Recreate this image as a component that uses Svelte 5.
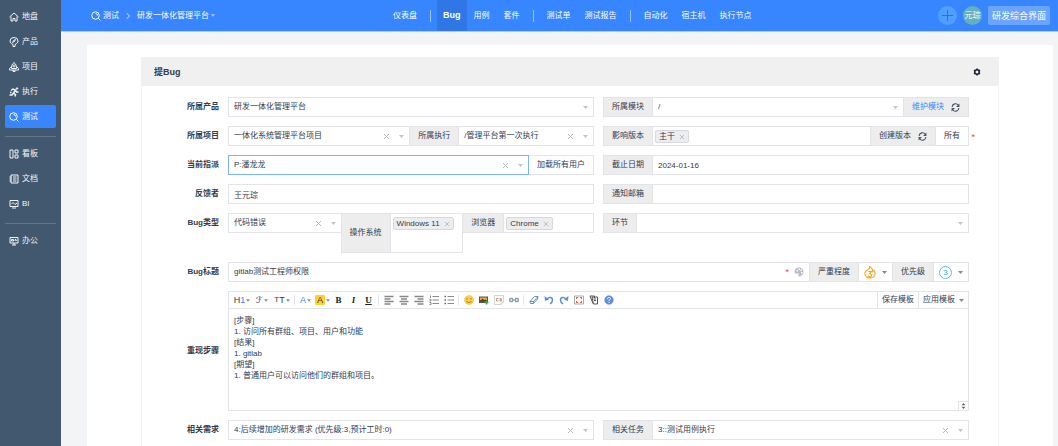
<script lang="ts">
	const mainMenu = [
		[
			{ name: '地盘', icon: 'home' },
			{ name: '产品', icon: 'product' },
			{ name: '项目', icon: 'project' },
			{ name: '执行', icon: 'run' },
			{ name: '测试', icon: 'test' }
		],
		[
			{ name: '看板', icon: 'kanban' },
			{ name: '文档', icon: 'doc' },
			{ name: 'BI', icon: 'bi' }
		],
		[{ name: '办公', icon: 'office' }]
	];
	const navGroups = [
		['仪表盘'],
		['Bug', '用例', '套件'],
		['测试单', '测试报告'],
		['自动化', '宿主机', '执行节点']
	];
	const toolGroups = [
		['bold', 'italic', 'underline'],
		['left', 'center', 'right', 'ol', 'ul'],
		['smile', 'image', 'code', 'link'],
		['eraser', 'undo', 'redo', 'full', 'source', 'help']
	];
	let activeMenu = $state('测试');
	let activeNav = $state('Bug');
	let title = $state('gitlab测试工程师权限');
	let steps = $state(
		'[步骤]\n1. 访问所有群组、项目、用户和功能\n[结果]\n1. gitlab\n[期望]\n1. 普通用户可以访问他们的群组和项目。'
	);
</script>

{#snippet menuIcon(name: string)}
	<svg class="menu-icon" viewBox="0 0 20 20" aria-hidden="true">
		{#if name === 'home'}
			<path d="M1 10 10 2l9 8M4 9v9h4v-5h4v5h4V9" />
		{:else if name === 'product'}
			<path d="M8 15C4 13 2 11 2 8a8 7 0 0 1 16 0c0 3-2 5-6 7v4H8zM7 11l2-4 4-2-2 4z" />
		{:else if name === 'project'}
			<path d="M10 1C6 4 5 8 5 13h10c0-5-1-9-5-12zM5 9l-4 4v3h18v-3l-4-4M8 16v3h4v-3" />
			<circle cx="10" cy="8" r="2" />
		{:else if name === 'run'}
			<path stroke-width="3" d="M4 7l4-3 5 2-4 6 4 3-1 4M9 12l-3 4H1M13 6l2 4h4M2 11h3" />
			<circle cx="16" cy="3" r="1.5" fill="currentColor" />
		{:else if name === 'test'}
			<circle cx="9" cy="9" r="7.5" />
			<path d="M15 15l4 4M9 5a4 4 0 0 1 4 4" />
		{:else if name === 'kanban'}
			<path d="M2 2h6v16H2zM12 2h6v6h-6zM12 12h6v6h-6z" />
		{:else if name === 'doc'}
			<path d="M4 2h14v16H4zM8 6h7M8 10h7M8 14h7M1 6h4M1 10h4M1 14h4" />
		{:else if name === 'bi'}
			<path d="M2 3h16v12H2zM6 18h8M5 10l3-3 4 4 4-3" />
		{:else}
			<path d="M2 3h16v11H2zM10 14v4M6 18h8M5 7h4v3H5zM12 10l1-4 2 4" />
		{/if}
	</svg>
{/snippet}

{#snippet caret()}
	<svg class="caret" viewBox="0 0 5 3" aria-hidden="true"><path d="M0 0h5L2.5 3z" /></svg>
{/snippet}

{#snippet refresh()}
	<svg class="refresh" viewBox="0 0 16 16" aria-hidden="true">
		<path d="M2 7a6 6 0 0 1 11-3M14 9a6 6 0 0 1-11 3" />
		<path class="solid" d="M15 1v6H9zM1 15V9h6z" />
	</svg>
{/snippet}

{#snippet cross()}
	<svg class="cross" viewBox="0 0 7 7" aria-hidden="true"><path d="M1 1l5 5M6 1 1 6" /></svg>
{/snippet}

{#snippet picker(id: string, value: string, clearable: boolean, size: string)}
	<div class="box picker {size}">
		<select {id}><option>{value}</option></select>
		{#if clearable}
			<button type="button" class="clear" aria-label="清除">{@render cross()}</button>
		{/if}
		{@render caret()}
	</div>
{/snippet}

{#snippet tag(text: string)}
	<span class="tag">
		{text}
		<button type="button" class="clear" aria-label="移除">{@render cross()}</button>
	</span>
{/snippet}

{#snippet toolIcon(name: string)}
	<svg class="tool-icon" viewBox="0 0 20 20" aria-hidden="true">
		{#if name === 'left'}
			<path stroke="#888" stroke-width="3" d="M1 3h18M1 8h12M1 13h18M1 18h12" />
		{:else if name === 'center'}
			<path stroke="#888" stroke-width="3" d="M1 3h18M4 8h12M1 13h18M4 18h12" />
		{:else if name === 'right'}
			<path stroke="#888" stroke-width="3" d="M1 3h18M7 8h12M1 13h18M7 18h12" />
		{:else if name === 'ol'}
			<path stroke="#888" stroke-width="2" d="M7 3h13M7 10h13M7 17h13M3 1v5M1 9h3v3H1M1 15h3v4H1" />
		{:else if name === 'ul'}
			<path stroke="#888" stroke-width="2" d="M7 3h13M7 10h13M7 17h13" />
			<path stroke="#666" stroke-width="3" d="M1 3h3M1 10h3M1 17h3" />
		{:else if name === 'smile'}
			<circle cx="10" cy="10" r="9" fill="#ffd04a" stroke="#f0b23a" />
			<path stroke="#a8701c" stroke-width="2" d="M6 6v3M14 6v3M5 12c2 4 8 4 10 0" />
		{:else if name === 'image'}
			<path fill="#58504a" d="M0 3h18v13H0z" />
			<path fill="#f4a52c" d="M2 5h14v5H2z" />
			<path fill="#4a3b2c" d="M3 12l4-5 4 4 2-2 3 3z" />
			<path stroke="#3fa53f" stroke-width="3" d="M15 11v8M11 15h8" />
		{:else if name === 'code'}
			<path fill="#fff" stroke="#aaa" d="M1 1h18v13l-5 5H1zM19 14h-5v5" />
			<path stroke="#c99a80" stroke-width="2" d="M9 7H5v5h4M11 8h5M11 11h5M13 6v7" />
		{:else if name === 'link'}
			<path stroke="#8a9fb5" stroke-width="3" d="M8 7H4a3 3 0 0 0 0 6h4M12 7h4a3 3 0 0 1 0 6h-4M6 10h8" />
		{:else if name === 'eraser'}
			<path fill="#fff" stroke="#6d8cba" stroke-width="2" d="M2 13 11 3h7l-1 5-8 9H3z" />
			<path stroke="#6d8cba" stroke-width="2" d="M2 13h7l8-9M9 13v4" />
		{:else if name === 'undo'}
			<path stroke="#5d8fd8" stroke-width="3" d="M6 8c4-5 11-4 11 2 0 4-2 6-5 8" />
			<path fill="#5d8fd8" d="M1 2l1 10 8-3z" />
		{:else if name === 'redo'}
			<path stroke="#5d8fd8" stroke-width="3" d="M14 8C10 3 3 4 3 10c0 4 2 6 5 8" />
			<path fill="#5d8fd8" d="M19 2l-1 10-8-3z" />
		{:else if name === 'full'}
			<path stroke="#aaa" stroke-width="2" d="M1 2h18v16H1z" />
			<path fill="#e2564d" d="M4 4h5L4 9zM16 4v5l-5-5zM4 16v-5l5 5zM16 16h-5l5-5z" />
		{:else if name === 'source'}
			<path fill="#fff" stroke="#555" stroke-width="2" d="M6 4h11v14H9zM2 2h9v4M9 8h5M10 11h4" />
			<path stroke="#555" stroke-width="2" d="M2 2l6 15" />
		{:else}
			<circle cx="10" cy="10" r="8.5" fill="#5d93ea" stroke="#3b70ca" />
			<path stroke="#fff" stroke-width="2" d="M7 8c0-4 6-4 6-1 0 2-3 2-3 5M10 14v2" />
		{/if}
	</svg>
{/snippet}

<div class="app">
	<aside class="sidebar">
		{#each mainMenu as group, index}
			{#if index > 0}
				<hr />
			{/if}
			{#each group as item}
				<a
					href="#{item.icon}"
					class="menu-item"
					class:active={item.name === activeMenu}
					onclick={() => (activeMenu = item.name)}
				>
					{@render menuIcon(item.icon)}
					{item.name}
				</a>
			{/each}
		{/each}
	</aside>

	<div class="content">
		<header class="topbar">
			<div class="crumbs">
				<a href="#qa">{@render menuIcon('test')}测试</a>
				<svg class="chevron" viewBox="0 0 4 8" aria-hidden="true"><path d="M0.5 1l3 3-3 3" /></svg>
				<a href="#product">研发一体化管理平台{@render caret()}</a>
			</div>
			<nav>
				{#each navGroups as group, index}
					{#if index > 0}
						<span class="divider"></span>
					{/if}
					{#each group as item}
						<a
							href="#{item}"
							class:active={item === activeNav}
							onclick={() => (activeNav = item)}>{item}</a
						>
					{/each}
				{/each}
			</nav>
			<div class="tools">
				<button type="button" class="round" aria-label="添加">
					<svg viewBox="0 0 11 11"><path d="M5.5 0v11M0 5.5h11" /></svg>
				</button>
				<button type="button" class="round avatar">元琮</button>
				<button type="button" class="vision">研发综合界面</button>
			</div>
		</header>

		<main>
			<section class="card">
				<div class="card-head">
					<h2>提Bug</h2>
					<button type="button" class="setting" aria-label="设置">
						<svg viewBox="0 0 16 16">
							<circle cx="8" cy="8" r="4.5" />
							<path d="M8 1v3M8 12v3M2 4.5l2.5 1.5M14 4.5l-2.5 1.5M2 11.5l2.5-1.5M14 11.5l-2.5-1.5" />
						</svg>
					</button>
				</div>
				<form onsubmit={(e) => e.preventDefault()}>
					<label class="title" for="product">所属产品</label>
					<div class="group">
						{@render picker('product', '研发一体化管理平台', false, '')}
					</div>
					<div class="group">
						<label class="addon" for="module">所属模块</label>
						{@render picker('module', '/', false, '')}
						<span class="addon action">
							<a href="#module">维护模块</a>
							<button type="button" aria-label="刷新">{@render refresh()}</button>
						</span>
					</div>

					<label class="title" for="project">所属项目</label>
					<div class="group">
						{@render picker('project', '一体化系统管理平台项目', true, 'grow-11')}
						<label class="addon" for="execution">所属执行</label>
						{@render picker('execution', '/管理平台第一次执行', true, 'grow-8')}
					</div>
					<div class="group">
						<label class="addon" for="build">影响版本</label>
						<div class="box tags">
							{@render tag('主干')}
							<input id="build" />
						</div>
						<span class="addon action">
							<a class="plain" href="#build">创建版本</a>
							<button type="button" aria-label="刷新">{@render refresh()}</button>
						</span>
						<button type="button" class="box btn">所有</button>
						<span class="required outside">*</span>
					</div>

					<label class="title" for="assigned">当前指派</label>
					<div class="group">
						{@render picker('assigned', 'P:潘龙龙', true, 'focus')}
						<button type="button" class="box btn">加载所有用户</button>
					</div>
					<div class="group">
						<label class="addon" for="deadline">截止日期</label>
						<input class="box field" id="deadline" value="2024-01-16" />
					</div>

					<label class="title" for="feedback">反馈者</label>
					<div class="group">
						<input class="box field" id="feedback" value="王元琮" />
					</div>
					<div class="group">
						<label class="addon" for="mail">通知邮箱</label>
						<input class="box field" id="mail" />
					</div>

					<label class="title" for="type">Bug类型</label>
					<div class="group">
						{@render picker('type', '代码错误', true, 'grow-12')}
						<label class="addon tall" for="os">操作系统</label>
						<div class="box tags tall grow-8">
							{@render tag('Windows 11')}
							<input id="os" />
						</div>
						<label class="addon" for="browser">浏览器</label>
						<div class="box tags grow-10">
							{@render tag('Chrome')}
							<input id="browser" />
						</div>
					</div>
					<div class="group">
						<label class="addon" for="stage">环节</label>
						{@render picker('stage', '', false, '')}
					</div>

					<label class="title" for="title">Bug标题</label>
					<div class="group wide">
						<div class="box title-box">
							<input id="title" bind:value={title} />
							<span class="required">*</span>
							<button type="button" aria-label="颜色">
								<svg class="palette" viewBox="0 0 20 20">
									<path
										fill-rule="evenodd"
										d="M10 1a9 8 0 0 0-9 8c0 4 3 5 6 4 2-1 3 0 2 2-1 3 0 4 2 4 5-1 8-5 8-10 0-4-4-8-9-8zM5 6h3v3H5zM9 3h3v3H9zM13 5h3v3h-3zM14 10h3v3h-3z"
									/>
								</svg>
							</button>
						</div>
						<span class="addon">严重程度</span>
						<button type="button" class="box level" aria-label="严重程度">
							<svg class="flame" viewBox="0 0 22 24" aria-hidden="true">
								<path d="M7 7C2 9 1 13 2 16c2 8 16 8 18 0 1-3 0-6-2-8l-2 2c0-4-2-7-6-9 1 3-1 5-3 6zM8 10h6l-4 4c5 0 5 6 1 6-2 0-3-1-4-2" />
							</svg>
							{@render caret()}
						</button>
						<span class="addon">优先级</span>
						<button type="button" class="box level" aria-label="优先级">
							<span class="pri">3</span>
							{@render caret()}
						</button>
					</div>

					<label class="title middle" for="steps">重现步骤</label>
					<div class="editor wide">
						<div class="toolbar">
							<button type="button" class="drop">H<b>1</b>{@render caret()}</button>
							<button type="button" class="drop script">ℱ{@render caret()}</button>
							<button type="button" class="drop"><small>T</small>T{@render caret()}</button>
							<span class="sep"></span>
							<button type="button" class="drop color">A{@render caret()}</button>
							<button type="button" class="drop color"><mark>A</mark>{@render caret()}</button>
							{#each toolGroups as group, index}
								{#if index > 0}
									<span class="sep"></span>
								{/if}
								{#each group as tool}
									<button type="button" class="tool {tool}" aria-label={tool}>
										{#if index === 0}
											{tool[0].toUpperCase()}
										{:else}
											{@render toolIcon(tool)}
										{/if}
									</button>
								{/each}
							{/each}
							<button type="button" class="template first">保存模板</button>
							<button type="button" class="template">应用模板{@render caret()}</button>
						</div>
						<textarea id="steps" bind:value={steps}></textarea>
						<span class="resizer">
							<svg viewBox="0 0 5 8" aria-hidden="true"><path d="M0 3h5L2.5 0zM0 5h5L2.5 8z" /></svg>
						</span>
					</div>

					<label class="title" for="story">相关需求</label>
					<div class="group">
						{@render picker('story', '4:后续增加的研发需求 (优先级:3,预计工时:0)', true, '')}
					</div>
					<div class="group">
						<label class="addon" for="task">相关任务</label>
						{@render picker('task', '3::测试用例执行', true, '')}
					</div>
				</form>
			</section>
		</main>
	</div>
</div>

<style>
	:global(body) {
		background: #f3f4f6;
	}
	.app {
		display: flex;
		min-height: 100vh;
		font-family: 'Liberation Sans', 'Noto Sans CJK SC', sans-serif;
		font-size: 8px;
		line-height: 12px;
		color: #313c52;
	}
	.app * {
		box-sizing: border-box;
	}
	a {
		color: inherit;
		text-decoration: none;
	}
	button,
	input,
	select,
	textarea {
		margin: 0;
		padding: 0;
		border: 0;
		border-radius: 0;
		outline: 0;
		background: none;
		font: inherit;
		color: inherit;
	}
	button {
		display: flex;
		align-items: center;
		justify-content: center;
		cursor: pointer;
	}
	svg {
		display: block;
		flex: none;
		fill: none;
	}

	.sidebar {
		flex: none;
		width: 61px;
		padding: 5px 5px 0;
		display: flex;
		flex-direction: column;
		gap: 2px;
		background: #42586f;
	}
	.sidebar hr {
		width: 100%;
		height: 1px;
		margin: 6px 0 3px;
		border: 0;
		background: #5f7890;
	}
	.menu-item {
		display: flex;
		align-items: center;
		gap: 3px;
		height: 23px;
		padding-left: 4px;
		border-radius: 2px;
		color: #f2f5f8;
	}
	.menu-item.active {
		background: #3785ff;
		color: #fff;
	}
	.menu-icon {
		width: 10px;
		height: 10px;
		stroke: currentColor;
		stroke-width: 2;
	}

	.content {
		flex: 1;
		min-width: 0;
		display: flex;
		flex-direction: column;
	}
	.topbar {
		display: flex;
		height: 32px;
		padding: 0 8px 0 30px;
		border-bottom: 1px solid #a9cbff;
		background: #3785ff;
		color: #fff;
	}
	.crumbs {
		display: flex;
		align-items: center;
		gap: 7px;
		flex: 0 0 295px;
	}
	.crumbs a {
		display: flex;
		align-items: center;
		gap: 2px;
	}
	.crumbs .caret {
		width: 4px;
		fill: #b9d5ff;
	}
	.chevron {
		width: 4px;
		height: 8px;
		stroke: #cfe1ff;
	}
	nav {
		display: flex;
		align-items: center;
	}
	nav a {
		padding: 0 7px;
		line-height: 31px;
		white-space: nowrap;
	}
	nav a.active {
		padding: 0 6px;
		background: #3077e6;
		font-size: 9px;
		font-weight: 700;
	}
	.divider {
		width: 1px;
		height: 12px;
		margin: 0 6px;
		background: #9cc3ff;
	}
	.tools {
		display: flex;
		align-items: center;
		gap: 6px;
		margin-left: auto;
	}
	.round {
		width: 19px;
		height: 19px;
		border-radius: 50%;
		background: #509eff;
	}
	.round svg {
		width: 11px;
		height: 11px;
		stroke: #2a70e0;
	}
	.avatar {
		background: #62b1c1;
		white-space: nowrap;
	}
	.vision {
		height: 19px;
		padding: 0 4px;
		border-radius: 2px;
		background: #6ba4ff;
		font-size: 9px;
		white-space: nowrap;
	}

	main {
		flex: 1;
		display: flex;
		margin: 13px 5px 0 26px;
		padding: 12px 54px 0;
		border-radius: 2px 2px 0 0;
		background: #fff;
	}
	.card {
		flex: 1;
		min-width: 0;
		border: solid #f3f4f5;
		border-width: 0 1px;
	}
	.card-head {
		display: flex;
		align-items: center;
		justify-content: space-between;
		height: 29px;
		margin: 0 -1px;
		padding: 0 18px 0 13px;
		background: #f0f0f0;
	}
	h2 {
		margin: 0;
		font-size: 9px;
		font-weight: 700;
	}
	.setting svg {
		width: 8px;
		height: 8px;
		stroke: #1b2536;
		stroke-width: 3;
	}

	form {
		display: grid;
		grid-template-columns: 77px minmax(0, 1fr) minmax(0, 1fr);
		gap: 9px;
		align-items: start;
		padding: 11px 29px 0 0;
	}
	.wide {
		grid-column: span 2;
	}
	.title {
		line-height: 20px;
		font-weight: 700;
		text-align: right;
	}
	.title.middle {
		align-self: center;
	}
	.group {
		position: relative;
		display: flex;
		align-items: flex-start;
	}
	.group > :global(* + *) {
		margin-left: -1px;
	}
	.box {
		height: 20px;
		border: 1px solid #e2e4e8;
		background: #fff;
	}
	.addon {
		display: flex;
		align-items: center;
		flex: none;
		height: 20px;
		padding: 0 8px;
		border: 1px solid #e2e4e8;
		background: #ededee;
		white-space: nowrap;
	}
	.tall {
		height: 40px;
	}
	.action {
		gap: 7px;
	}
	.action a {
		color: #3785ff;
	}
	.action a.plain {
		color: inherit;
	}
	.refresh {
		width: 9px;
		height: 9px;
		stroke: #4a5262;
		stroke-width: 2;
	}
	.refresh .solid {
		fill: #4a5262;
		stroke: none;
	}
	.picker {
		display: flex;
		align-items: center;
		gap: 9px;
		flex: 1 1 0;
		min-width: 0;
		padding: 0 5px;
	}
	.picker select {
		flex: 1;
		min-width: 0;
		height: 100%;
		appearance: none;
	}
	.picker.focus {
		z-index: 1;
		border-color: #7db0ff;
	}
	.grow-8 {
		flex: 8 1 0;
	}
	.grow-10 {
		flex: 10 1 0;
	}
	.grow-11 {
		flex: 11 1 0;
	}
	.grow-12 {
		flex: 12 1 0;
	}
	.caret {
		width: 5px;
		height: 3px;
		fill: #838a9d;
	}
	.picker .caret {
		fill: #bfc4cf;
	}
	.cross {
		width: 7px;
		height: 7px;
		stroke: #b5b8bf;
	}
	.field {
		flex: 1;
		min-width: 0;
		padding: 0 5px;
	}
	.btn {
		flex: none;
		padding: 0 8px;
	}
	.tags {
		display: flex;
		flex-wrap: wrap;
		align-content: flex-start;
		min-width: 0;
		padding: 3px 2px 0;
	}
	.tags:not(.grow-8, .grow-10) {
		flex: 1;
	}
	.tags input {
		flex: 1;
		width: 4px;
		min-width: 0;
	}
	.tag {
		display: flex;
		align-items: center;
		gap: 4px;
		height: 13px;
		padding: 0 3px;
		border: 1px solid #d5d8de;
		border-radius: 2px;
		background: #ededf0;
		white-space: nowrap;
	}
	.tag .cross {
		width: 6px;
		height: 6px;
	}
	.required {
		color: #f33;
		font-size: 9px;
	}
	.outside {
		position: absolute;
		top: 5px;
		right: -6px;
	}
	.title-box {
		display: flex;
		align-items: center;
		gap: 5px;
		flex: 1;
		min-width: 0;
		padding: 0 5px;
	}
	.title-box input {
		flex: 1;
		min-width: 0;
	}
	.palette {
		width: 10px;
		height: 10px;
		fill: #b8bdcb;
	}
	.level {
		flex: none;
		gap: 6px;
		padding: 0 5px;
	}
	.flame {
		width: 12px;
		height: 13px;
		stroke: #ffa51f;
		stroke-width: 2;
	}
	.pri {
		width: 13px;
		height: 13px;
		border: 1px solid #5cb8f7;
		border-radius: 50%;
		line-height: 11px;
		color: #3fa7f0;
	}

	.editor {
		position: relative;
		border: 1px solid #e2e4e8;
	}
	.toolbar {
		display: flex;
		align-items: center;
		gap: 2px;
		height: 17px;
		padding-left: 4px;
		border-bottom: 1px solid #e2e4e8;
	}
	.toolbar button {
		flex: none;
		height: 16px;
	}
	.drop {
		width: 18px;
		font-size: 9px;
	}
	.drop .caret {
		width: 4px;
		margin-left: 1px;
	}
	.drop b {
		font-weight: 400;
		color: #3785ff;
	}
	.drop small {
		font-size: 8px;
	}
	.script {
		font-family: 'DejaVu Sans', sans-serif;
	}
	.color {
		width: 15px;
		color: #3785ff;
	}
	mark {
		padding: 0 2px;
		border-radius: 1px;
		background: #ffcf33;
		line-height: 10px;
		color: #313c52;
	}
	.sep {
		width: 1px;
		height: 10px;
		margin: 0 1px;
		background: #e2e4e8;
	}
	.tool {
		width: 13px;
		font-family: 'Liberation Serif', serif;
		font-size: 9px;
		font-weight: 700;
		color: #222;
	}
	.tool.italic {
		font-style: italic;
	}
	.tool.underline {
		text-decoration: underline;
	}
	.tool-icon {
		width: 10px;
		height: 10px;
	}
	.template {
		gap: 4px;
		margin-left: -2px;
		padding: 0 4px;
		border-left: 1px solid #e2e4e8;
	}
	.template.first {
		margin-left: auto;
	}
	textarea {
		display: block;
		width: 100%;
		height: 101px;
		padding: 6px 5px;
		line-height: 11px;
		resize: none;
	}
	.resizer {
		position: absolute;
		right: 0;
		bottom: 0;
		padding: 1px 2px;
		border: solid #e2e4e8;
		border-width: 1px 0 0 1px;
	}
	.resizer svg {
		width: 5px;
		height: 6px;
		fill: #5c6479;
	}
</style>
